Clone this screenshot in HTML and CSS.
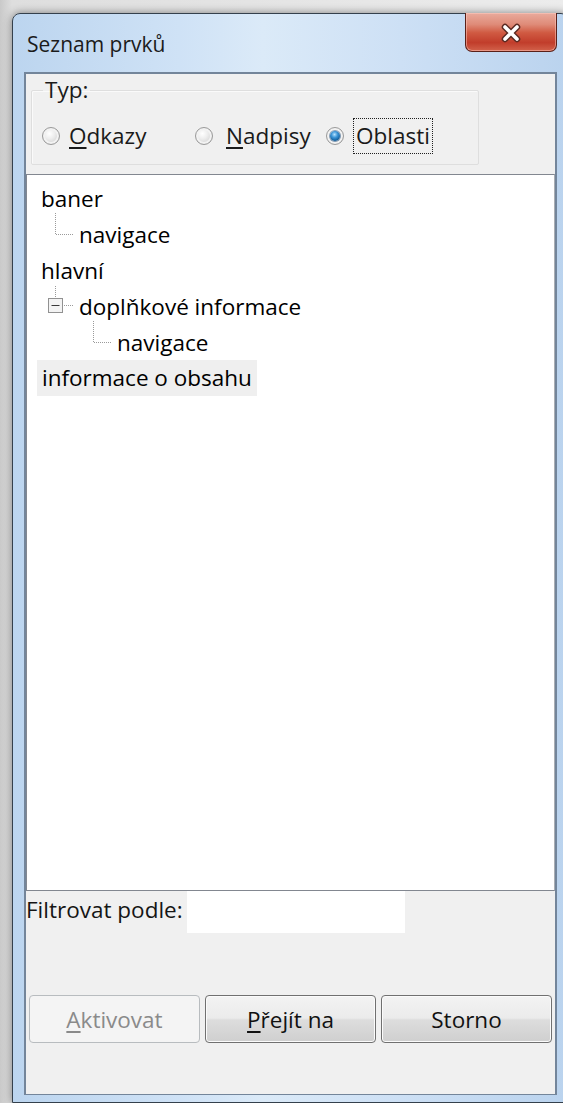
FILE: index.html
```html
<!DOCTYPE html>
<html lang="cs">
<head>
<meta charset="utf-8">
<title>Seznam prvků</title>
<link rel="stylesheet" href="styles.css">
</head>
<body>
<div class="window">
  <div class="titlebar">
    <span class="title">Seznam prvků</span>
    <button class="close" aria-label="Zavřít">
      <svg width="24" height="20" viewBox="0 0 24 20">
        <path d="M6 4 L18 16 M18 4 L6 16" stroke="#5a2a22" stroke-width="6.5" stroke-linecap="round"/>
        <path d="M6 4 L18 16 M18 4 L6 16" stroke="#ffffff" stroke-width="3.6" stroke-linecap="round"/>
      </svg>
    </button>
  </div>
  <div class="client">
    <div class="group-area">
      <fieldset class="group">
        <legend>Typ:</legend>
        <div class="radios">
          <label class="radio r1"><span class="dot"></span><span class="rlabel"><u>O</u>dkazy</span></label>
          <label class="radio r2"><span class="dot"></span><span class="rlabel"><u>N</u>adpisy</span></label>
          <label class="radio checked"><span class="dot"></span><span class="rlabel focus">Oblasti</span></label>
        </div>
      </fieldset>
    </div>

    <div class="list">
      <div class="row">baner</div>
      <div class="row">
        <svg class="branch" width="38" height="36" viewBox="0 0 38 36">
          <path d="M14.5 -3 V18.5 H33" class="dots"/>
        </svg>navigace
      </div>
      <div class="row">hlavní</div>
      <div class="row">
        <svg class="branch" width="38" height="36" viewBox="0 0 38 36">
          <path d="M14.5 -2 V10 M21 17.5 H33" class="dots"/>
          <rect x="7.5" y="10.5" width="14" height="14" class="box"/>
          <path d="M10.5 17.5 H18.5" class="minus"/>
        </svg>doplňkové informace
      </div>
      <div class="row">
        <svg class="branch" width="76" height="36" viewBox="0 0 76 36">
          <path d="M52.5 -3 V18.5 H71" class="dots"/>
        </svg>navigace
      </div>
      <div class="row"><span class="selected">informace o obsahu</span></div>
    </div>

    <div class="filter">
      <span class="flabel">Filtrovat podle:</span>
      <span class="input"></span>
    </div>

    <div class="buttons">
      <button class="btn" disabled><u>A</u>ktivovat</button>
      <button class="btn"><u>P</u>řejít na</button>
      <button class="btn">Storno</button>
    </div>
  </div>
</div>
</body>
</html>
```

FILE: styles.css
```css
* { box-sizing: border-box; }

html, body {
  margin: 0;
  height: 100%;
}

body {
  background: linear-gradient(to right, #c9c9c9 0, #dedede 12px, #ececec 100%);
  overflow: hidden;
  font-family: "Open Sans", "Noto Sans", "DejaVu Sans", sans-serif;
  font-size: 22.5px;
  color: #000;
}

/* Dialog window frame */
.window {
  margin: 13px 0 0 12px;
  width: 557px;
  height: 1090px;
  border: 1px solid #34404c;
  border-radius: 8px 8px 0 0;
  background:
    linear-gradient(to right, #bcd5ef 0, #cfe2f6 30%, #dbeaf8 45%, #cde0f5 70%, #bad3ee 100%);
  box-shadow: 0 0 9px rgba(0, 0, 0, .45);
  padding: 0 11px 7px 11px;
  display: flex;
  flex-direction: column;
}

.titlebar {
  height: 58px;
  flex: none;
  display: flex;
  justify-content: space-between;
  align-items: flex-start;
}

.title {
  margin: 16px 0 0 3px;
  font-size: 21px;
  color: #1b1b1b;
  line-height: 28px;
}

.close {
  margin: -1px 0 0 0;
  width: 92px;
  height: 39px;
  padding: 0;
  border: 1px solid #5a2018;
  border-top: none;
  border-radius: 0 0 7px 7px;
  background: linear-gradient(#e9ab9d 0, #df8b78 30%, #d05a42 52%, #c13d2b 78%, #d2624b 100%);
  box-shadow: inset 0 0 0 1px rgba(255, 205, 195, .5);
  display: flex;
  align-items: center;
  justify-content: center;
}

.close svg { display: block; margin-top: 1px; }

/* Client area */
.client {
  flex: 1;
  border: 2px solid #73859a;
  border-bottom-width: 1px;
  background: #f0f0f0;
  display: flex;
  flex-direction: column;
}

.group-area {
  height: 100px;
  flex: none;
  padding: 3px 76px 0 5px;
}

.group {
  margin: 0;
  padding: 0;
  height: 88px;
  border: 1px solid #dedede;
  box-shadow: inset 1px 1px 0 #fafafa;
  border-radius: 2px;
}

.group legend {
  padding: 0 2px;
  margin-left: 11px;
  line-height: 26px;
  color: #1a1a1a;
}

.radios {
  display: flex;
  align-items: center;
  height: 40px;
  margin-top: 13px;
  padding-left: 10px;
}

.radio {
  display: flex;
  align-items: center;
  gap: 7px;
  flex: none;
}

.r1 { width: 153px; }
.r2 { width: 131px; gap: 11px; }
.checked { gap: 9px; }

.dot {
  flex: none;
  width: 18px;
  height: 18px;
  border-radius: 50%;
  border: 1px solid #9a9a9a;
  background: radial-gradient(circle at 40% 35%, #ffffff 0, #eeeeee 35%, #d4d4d4 75%, #c4c4c4 100%);
  box-shadow: inset 0 0 0 2px #f2f2f2;
  display: flex;
  align-items: center;
  justify-content: center;
}

.checked .dot::after {
  content: "";
  width: 10px;
  height: 10px;
  border-radius: 50%;
  background: radial-gradient(circle at 45% 35%, #b5e2ff 0, #3f97d8 35%, #12609f 70%, #0a3f70 100%);
  box-shadow: 0 0 0 1px rgba(30, 80, 130, .5);
}

.rlabel {
  color: #1a1a1a;
  line-height: 28px;
  padding: 4px 2px;
}

.rlabel u { text-underline-offset: 3px; }

.rlabel.focus {
  outline: 1px dotted #202020;
  outline-offset: -1px;
  padding: 4px 3px;
}

/* Tree list */
.list {
  height: 717px;
  flex: none;
  background: #fff;
  border: 1px solid #828790;
  border-right-color: #a9adb3;
  padding: 5px 0 0 14px;
}

.row {
  height: 36px;
  display: flex;
  align-items: center;
  white-space: nowrap;
}

.branch {
  flex: none;
  overflow: visible;
  align-self: flex-start;
}

.branch .dots {
  fill: none;
  stroke: #9a9a9a;
  stroke-width: 1;
  stroke-dasharray: 1 1;
}

.branch .box {
  fill: #f3f3f3;
  stroke: #919191;
  stroke-width: 1;
}

.branch .minus {
  stroke: #3a3a3a;
  stroke-width: 1;
}

.selected {
  background: #efefef;
  margin-left: -4px;
  padding: 0 5px;
  line-height: 36px;
}

/* Filter */
.filter {
  height: 44px;
  flex: none;
  display: flex;
  align-items: flex-start;
}

.flabel {
  margin-top: 4px;
  line-height: 30px;
  color: #151515;
}

.input {
  margin: 0 0 0 4px;
  width: 218px;
  height: 42px;
  background: #fff;
}

/* Buttons */
.buttons {
  margin-top: 60px;
  display: flex;
  gap: 5px;
  padding-left: 3px;
}

.btn {
  width: 171px;
  height: 48px;
  font: inherit;
  color: #111;
  border: 1px solid #707070;
  border-radius: 4px;
  background: linear-gradient(#f3f3f3 0, #ebebeb 48%, #dddddd 52%, #cfcfcf 100%);
  box-shadow: inset 0 0 0 1px #fbfbfb;
  padding: 0;
}

.btn u { text-underline-offset: 3px; }

.btn:disabled {
  color: #8a8a8a;
  border-color: #b8bcbf;
  background: #f4f4f4;
  box-shadow: none;
}
```
